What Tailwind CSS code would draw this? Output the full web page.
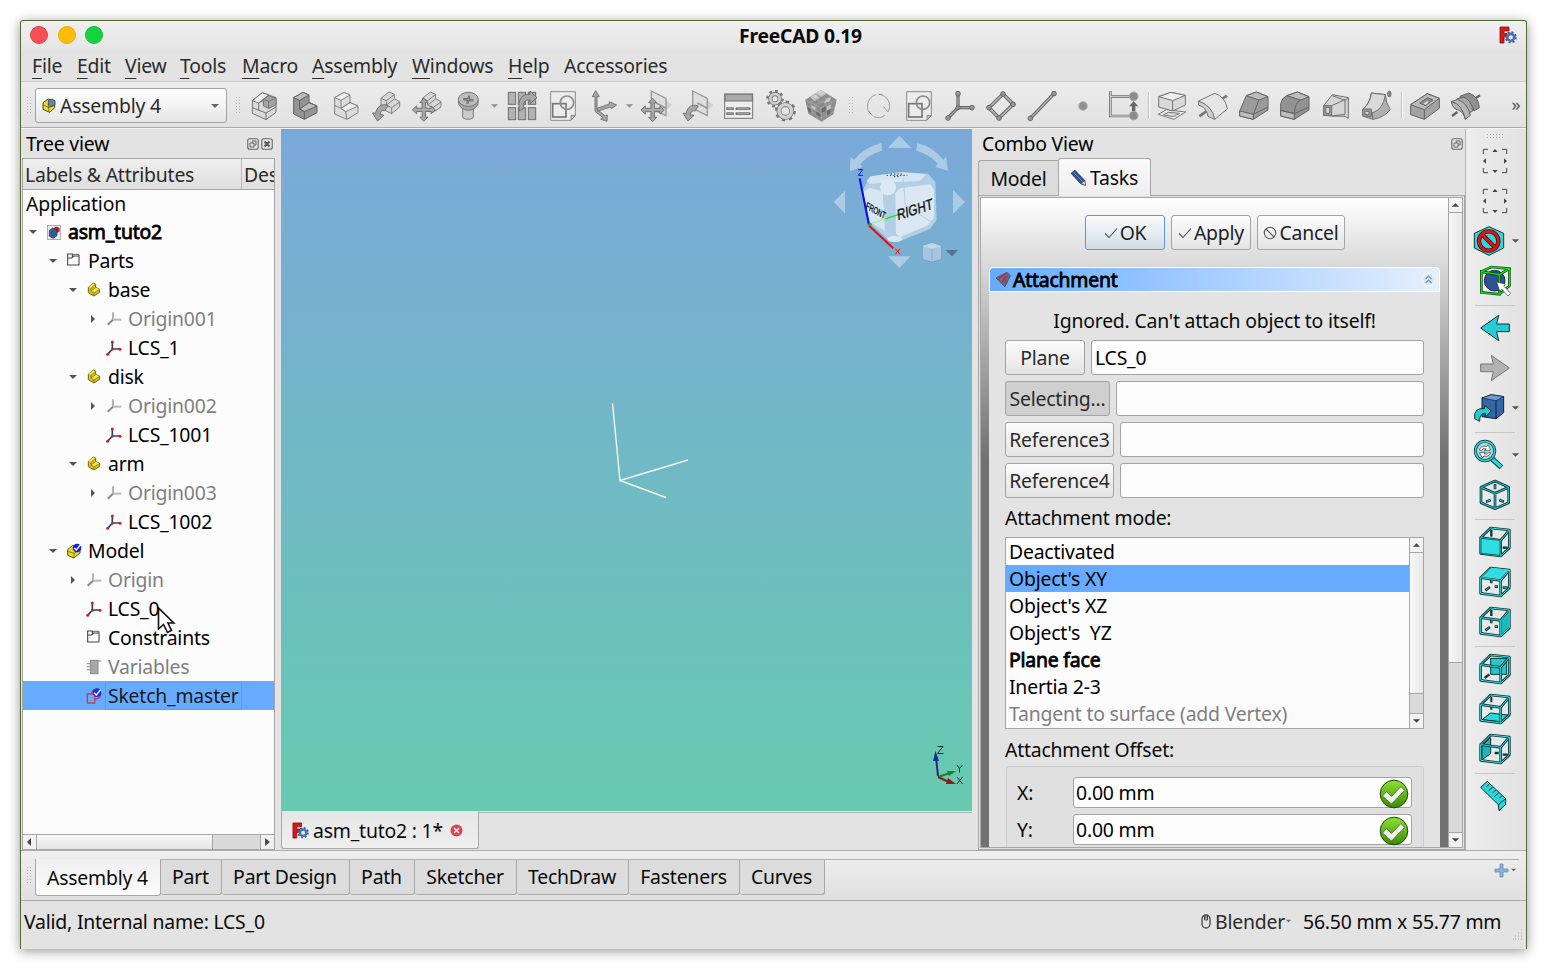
<!DOCTYPE html>
<html lang="en">
<head>
<meta charset="utf-8">
<title>FreeCAD 0.19</title>
<script src="https://cdn.jsdelivr.net/npm/@tailwindcss/browser@4"></script>
</head>
<body class="w-[1547px] h-[969px] overflow-hidden bg-white font-['Noto_Sans',sans-serif] text-[19.4px] tracking-[-0.2px] leading-[27px] text-[#0a0a0a] whitespace-nowrap">

<!-- shared symbols -->
<svg class="absolute w-0 h-0">
  <defs>
    <symbol id="down" viewBox="0 0 10 6"><path d="M1 1H9L5 5Z" fill="currentColor"/></symbol>
    <symbol id="right" viewBox="0 0 6 10"><path d="M1 1V9L5 5Z" fill="currentColor"/></symbol>
    <symbol id="float" viewBox="0 0 12 12"><rect x=".75" y=".75" width="10.5" height="10.5" rx="2" fill="none" stroke="#666" stroke-width="1.1"/><path d="M5.2 4.8V3H9V7H7.2M3 5H7V9H3Z" fill="none" stroke="#666"/></symbol>
    <symbol id="close" viewBox="0 0 12 12"><rect x=".75" y=".75" width="10.5" height="10.5" rx="2" fill="none" stroke="#666" stroke-width="1.1"/><path d="M3.5 3.5 8.5 8.5M8.5 3.5 3.5 8.5" stroke="#555" stroke-width="2"/></symbol>
    <symbol id="part" viewBox="198 290 48 48">
      <path d="M205 306 220 293 227 296V306L239 312V321L222 332 205 322Z" fill="#d8c01c" stroke="#5d5208" stroke-width="2.5"/>
      <path d="M206 305 220 294 226 297 213 309ZM213 318 227 307 238 312 222 322Z" fill="#f8e94e"/>
      <path d="M213 309V317L222 322V331M213 309 226 298M213 317 227 307M222 322 238 313" fill="none" stroke="#5d5208" stroke-width="1.6"/>
    </symbol>
    <symbol id="origin" viewBox="259 374 48 48"><path d="M280 378V400" stroke="#b5b5b5" stroke-width="6"/><path d="M281 400H305" stroke="#b9b9b9" stroke-width="6"/><path d="M280 400 264 415" stroke="#8a8a8a" stroke-width="6"/></symbol>
    <symbol id="lcs" viewBox="259 461 48 48"><path d="M278 468V488H301M278 488 264 504" fill="none" stroke="#27416e" stroke-width="5"/><g fill="#cf2222"><circle cx="278" cy="467" r="4.5"/><circle cx="301" cy="489" r="4.5"/><circle cx="278" cy="489" r="4"/><circle cx="264" cy="504" r="4.5"/></g></symbol>
    <symbol id="folder" viewBox="140 205 48 48"><path d="M145 208H159V214H179V241H145ZM145 220H157L163 214" fill="none" stroke="#444" stroke-width="3.200"/><path d="M160 209H179V214" fill="none" stroke="#444" stroke-width="2.500"/></symbol>
    <symbol id="fc" viewBox="0 0 18 18">
      <path d="M1 1H10V5H5V7.5H8V11H5V17H1Z" fill="#d21a1a" stroke="#8d0b0b" stroke-width=".8"/>
      <circle cx="11.8" cy="11.3" r="5" fill="none" stroke="#34578f" stroke-width="2" stroke-dasharray="2 1.93"/>
      <circle cx="11.8" cy="11.3" r="3.4" fill="#e6ebf4" stroke="#4872b2" stroke-width="2.6"/>
    </symbol>
    <symbol id="sketch" viewBox="141 27 96 96">
      <path d="M152 32H226V102L212 118H152Z" fill="#ececec" stroke="#8a8a8a" stroke-width="3"/>
      <path d="M213 118V103H226Z" fill="#b5b5b5" stroke="#777" stroke-width="2"/>
      <rect x="158" y="68" width="40" height="40" fill="none" stroke="#777" stroke-width="5"/>
      <circle cx="201" cy="65" r="20" fill="none" stroke="#8d8d8d" stroke-width="5"/>
    </symbol>
    <symbol id="cross" viewBox="0 0 74 74"><path d="M37 2 49 15H42V32H59V25L72 37 59 49V42H42V59H49L37 72 25 59H32V42H15V49L2 37 15 25V32H32V15H25Z" fill="#a9a9a9" stroke="#707070" stroke-width="3"/></symbol>
    <symbol id="curl" viewBox="0 0 56 66"><path d="M2 36 12 37C16 16 30 4 52 12L42 28C32 26 27 31 26 41L38 43 18 62Z" fill="#a5a5a5" stroke="#6c6c6c" stroke-width="3"/></symbol>
    <symbol id="fit" viewBox="45 45 96 96"><path d="M58 72V58H72M114 58H128V72M128 114V128H114M72 128H58V114" fill="none" stroke="#444" stroke-width="3"/><path d="M93 57 101 66H85ZM93 129 101 120H85ZM57 93 66 85V101ZM129 93 120 85V101Z" fill="#444"/></symbol>
    <path id="frame" d="M50 203 110 211V258L50 250ZM50 203 80 174 136 180 110 211M136 180V234L110 258" fill="none" stroke-linejoin="round"/>
    <symbol id="cube" viewBox="45 168 96 96"><use href="#frame" stroke="#0b3537" stroke-width="8"/><use href="#frame" stroke="#35dde0" stroke-width="3"/></symbol>
    <symbol id="ticks" viewBox="45 168 96 96"><path d="M82 206V220M64 241 78 231M92 230H102M116 233H131" stroke="#0b3537" stroke-width="8"/><path d="M82 208V218M67 239 76 232M94 230H100M118 233H129" stroke="#30b9bc" stroke-width="3"/></symbol>
    <linearGradient id="gg" x1="0" y1="0" x2="0" y2="1"><stop offset="0" stop-color="#8ce234"/><stop offset="1" stop-color="#3c8a05"/></linearGradient>
    <symbol id="ok" viewBox="0 0 30 30"><circle cx="15" cy="15" r="13.8" fill="url(#gg)" stroke="#1c4a06"/><path d="M3.5 17 7.5 12.5 12.5 17.5 22 7.5 25.5 11.5 12.5 25Z" fill="#f1f1ee" stroke="#3e6b2a" stroke-width=".8"/></symbol>
    <pattern id="dots" width="3" height="3" patternUnits="userSpaceOnUse"><rect width="1" height="1" fill="#b0b0b0"/></pattern>
  </defs>
</svg>

<div class="w-full h-full pt-5 pl-5">
<div class="w-[1507px] h-[929px] flex flex-col border border-b-0 border-[#566b33] rounded-t-[3px] bg-[#e3e3e3] shadow-[0_2px_12px_rgba(0,0,0,0.42)]">

  <!-- title bar -->
  <div class="h-[29px] shrink-0 flex items-center bg-linear-to-b from-[#f0f0f0] to-[#e5e5e5] rounded-t-[3px]">
    <div class="flex gap-[10px] pl-[9px] pb-[2px]">
      <span class="size-[18px] rounded-full bg-[#f45156] border border-[#e04048]"></span>
      <span class="size-[18px] rounded-full bg-[#fcbc0b] border border-[#eda80a]"></span>
      <span class="size-[18px] rounded-full bg-[#14d33c] border border-[#12bf35] -ml-px"></span>
    </div>
    <div class="w-[123px] ml-[636px] font-bold text-[19.3px] tracking-[-0.2px]">FreeCAD 0.19</div>
    <svg class="size-[18px] ml-[637px] mb-[2px]"><use href="#fc"/></svg>
  </div>

  <!-- menu bar -->
  <div class="h-[31px] shrink-0 flex items-center pb-px pl-[11px] text-[#2b2b2b] [&_u]:underline-offset-[5px] [&_u]:decoration-1">
    <span class="w-[45px]"><u>F</u>ile</span><span class="w-[48px]"><u>E</u>dit</span><span class="w-[55px]"><u>V</u>iew</span><span class="w-[62px]"><u>T</u>ools</span><span class="w-[70px]"><u>M</u>acro</span><span class="w-[100px]"><u>A</u>ssembly</span><span class="w-[96px]"><u>W</u>indows</span><span class="w-[56px]"><u>H</u>elp</span><span>Accessories</span>
  </div>

  <!-- toolbar -->
  <div class="h-[48px] shrink-0 flex items-center border-t border-[#cacaca] bg-linear-to-b from-[#ececec] to-[#e1e1e1] shadow-[inset_0_-1px_0_#f5f5f5,inset_0_-2px_0_#acacac] text-[#8e8e8e]">
    <svg class="w-[5px] h-[18px] ml-[6px]"><rect width="5" height="18" fill="url(#dots)"/></svg>
    <div class="ml-[3px] w-[192px] h-[35px] flex items-center rounded-[3px] border border-[#a3a3a3] bg-linear-to-b from-white to-[#e6e6e6] text-[#2b2b2b]">
      <svg class="size-[16px] ml-[5px] shrink-0" viewBox="124 291 48 48"><path d="M130 305 146 294 165 300V320L150 334 130 325Z" fill="#ecdc2e" stroke="#4d4608" stroke-width="3"/><path d="M146 298 157 294 166 299V312L152 318 146 312Z" fill="#5b84b4" stroke="#29384a" stroke-width="2"/><path d="M130 312 146 319 148 332M146 306V320L165 313" stroke="#6a5f08" stroke-width="2.4" fill="none"/></svg>
      <span class="ml-[3px] w-[150px] shrink-0">Assembly 4</span>
      <svg class="w-[10px] h-[6px] text-[#666] shrink-0"><use href="#down"/></svg>
    </div>
    <svg class="w-[5px] h-[18px] ml-[9px]"><rect width="5" height="18" fill="url(#dots)"/></svg>

    <div class="flex gap-[8.8px] ml-[7px] [&>svg]:size-8">
      <svg viewBox="744 267 96 96" stroke="#757575" stroke-width="3" stroke-linejoin="round"><path d="M757 299 787 275 828 290V334L798 356 757 337Z" fill="#dadada"/><path d="M757 299 787 275 806 282 776 306Z" fill="#f0f0f0"/><path d="M790 295 806 284 828 291V312L806 322 790 315Z" fill="#a4a4a4"/><path d="M790 295 806 301 828 291M806 301V322M757 320 798 336V356M798 336 828 318M776 306V328M776 306 790 298" fill="none"/></svg>
      <svg viewBox="866 267 96 96" stroke="#616161" stroke-width="3" stroke-linejoin="round"><path d="M880 290 908 274 926 282V304L950 315V335L912 355 880 339Z" fill="#959595"/><path d="M880 290 908 274 926 282 898 298ZM912 332 898 324 926 305 950 315Z" fill="#bdbdbd"/><path d="M898 298V324L912 332V355" fill="none"/></svg>
      <svg viewBox="989 267 96 96" stroke="#828282" stroke-width="3" stroke-linejoin="round"><path d="M1003 290 1031 274 1049 282V304L1073 315V335L1040 355 1003 339Z" fill="#dcdcdc"/><path d="M1003 290 1031 274 1049 282 1022 298ZM1036 332 1022 322 1049 305 1073 315Z" fill="#efefef"/><path d="M1022 298V322L1036 332 1040 355M1003 313 1022 322M1022 322 1049 304" fill="none"/></svg>
      <svg viewBox="1111 267 96 96" stroke="#808080" stroke-width="3" stroke-linejoin="round"><path d="M1144 292 1168 273 1184 280V293L1200 302V318L1176 338 1144 322Z" fill="#d8d8d8"/><path d="M1144 292 1160 299 1184 281M1160 299V312L1176 320 1200 303M1176 320V337M1160 312 1184 294" fill="none"/><use href="#curl" x="1115" y="302" width="56" height="62"/></svg>
      <svg viewBox="1234 267 96 96" stroke="#808080" stroke-width="3" stroke-linejoin="round"><path d="M1268 292 1292 273 1308 280V293L1324 302V318L1300 334 1268 322Z" fill="#d8d8d8"/><path d="M1268 292 1284 299 1308 281M1284 299V312L1300 320 1324 303M1300 320V334M1284 312 1308 294" fill="none"/><use href="#cross" x="1236" y="290" width="73" height="73"/></svg>
      <svg viewBox="1356 267 96 96" stroke="#787878" stroke-width="3"><path d="M1388 322H1420V350Q1404 360 1388 350Z" fill="#cbcbcb"/><ellipse cx="1405" cy="302" rx="30" ry="26" fill="#a5a5a5"/><ellipse cx="1405" cy="295" rx="30" ry="21" fill="#bcbcbc"/><path d="M1390 294 1420 298M1408 284 1402 308" stroke="#5e5e5e" stroke-width="7"/><path d="M1390 294 1420 298M1408 284 1402 308" stroke="#aaa" stroke-width="2"/></svg>
    </div>
    <svg class="w-[9px] h-[6px] ml-[6px] mr-[7px]"><use href="#down"/></svg>
    <div class="flex gap-[8.8px] [&>svg]:size-8">
      <svg viewBox="18 27 96 96" stroke="#6e6e6e" stroke-width="3"><g fill="#b1b1b1"><rect x="25" y="34" width="22" height="36"/><rect x="55" y="34" width="22" height="36"/><rect x="85" y="34" width="22" height="36"/><rect x="25" y="80" width="22" height="36"/><rect x="55" y="80" width="22" height="36"/><rect x="85" y="80" width="22" height="36"/></g><path d="M58 90C52 55 66 38 90 40V30L111 50 90 68V57C74 55 68 64 72 82Z" fill="#a8a8a8"/></svg>
      <svg><use href="#sketch"/></svg>
      <svg viewBox="264 27 96 96" stroke="#6a6a6a" stroke-width="2.5" fill="#a6a6a6"><path d="M287 29 298 47H291V85L316 105 322 102 321 121 302 115 309 110 285 91V47H277Z"/><path d="M291 82 328 69V62L350 72 334 83 331 78 293 91Z"/></svg>
    </div>
    <svg class="w-[9px] h-[6px] ml-[5px] mr-[7px]"><use href="#down"/></svg>
    <div class="flex gap-[9px] [&>svg]:size-8">
      <svg viewBox="425 27 96 96"><path d="M500 56 518 72 500 88Z" fill="#d0d0d0"/><path d="M456 30 500 52V104L456 82Z" fill="#dedede" stroke="#989898" stroke-width="4"/><path d="M470 66 500 82" stroke="#999" stroke-width="5"/><use href="#cross" x="423" y="50" width="74" height="74"/></svg>
      <svg viewBox="548 27 96 96"><path d="M624 56 642 72 624 88Z" fill="#d0d0d0"/><path d="M580 30 624 52V104L580 82Z" fill="#dedede" stroke="#989898" stroke-width="4"/><path d="M594 66 624 82" stroke="#999" stroke-width="5"/><use href="#curl" x="547" y="64" width="56" height="60"/></svg>
      <svg viewBox="669 27 96 96" stroke="#757575" stroke-width="3"><rect x="674" y="39" width="84" height="73" fill="#ededed"/><rect x="675" y="40" width="82" height="20" fill="#a9a9a9"/><path d="M682 83H698M682 98H698M710 83H748M710 98H748" stroke-width="8" stroke-linecap="round"/><path d="M683 83H697M683 98H697M711 83H747M711 98H747" stroke="#c4c4c4" stroke-width="2"/></svg>
      <svg viewBox="792 27 96 96" fill="none"><circle cx="825" cy="53" r="22" stroke="#777" stroke-width="9" stroke-dasharray="8 9.2"/><circle cx="825" cy="53" r="14" stroke="#7b7b7b" stroke-width="13"/><circle cx="825" cy="53" r="14" stroke="#cfcfcf" stroke-width="8"/><circle cx="856" cy="90" r="27" stroke="#777" stroke-width="9" stroke-dasharray="10 11.2"/><circle cx="856" cy="90" r="19" stroke="#7b7b7b" stroke-width="15"/><circle cx="856" cy="90" r="19" stroke="#cfcfcf" stroke-width="10"/></svg>
      <svg viewBox="915 27 96 96"><path d="M963 27 1010 56 1000 100 965 122 925 98 916 56Z" fill="#8b8b8b"/><path d="M963 27 980 38 963 48 946 38ZM930 48 946 40 960 50 944 60ZM980 52 994 48 988 62 972 66Z" fill="#d0d0d0"/><path d="M916 57 963 80 1010 56M918 72 964 98 1007 74M922 86 965 110 1003 90M932 61 938 104M947 70 951 114M978 70 979 112M994 62 991 104M963 80 965 122M931 46 980 70M947 37 995 62M995 46 947 72M980 37 932 62" stroke="#a9a9a9" stroke-width="2" fill="none"/><path d="M965 83 977 76V90L965 96ZM981 90 992 84V97L981 103ZM922 78 932 84 934 96 925 91ZM948 92 961 98V108L949 102Z" fill="#696969"/><path d="M981 76 992 70V82L981 88ZM934 72 946 78 947 88 936 82Z" fill="#c4c4c4"/></svg>
    </div>
    <svg class="w-[5px] h-[18px] ml-[12px] mr-[8px]"><rect width="5" height="18" fill="url(#dots)"/></svg>
    <div class="flex gap-[9px] [&>svg]:size-8">
      <svg viewBox="1086 27 96 96" fill="none" stroke="#8d8d8d" stroke-width="2.5"><path d="M1128 41A35 35 0 0 0 1117 103L1105 90M1121 107A35 35 0 0 0 1155 103M1136 40A35 35 0 0 1 1164 93M1164 93 1150 76M1147 40 1136 40"/></svg>
      <svg><use href="#sketch"/></svg>
      <svg viewBox="1332 27 96 96"><path d="M1374 38V80H1416M1374 80 1344 111" stroke="#666" stroke-width="10" fill="none"/><path d="M1374 38V80H1416M1374 80 1344 111" stroke="#a4a4a4" stroke-width="4" fill="none"/><g fill="#999" stroke="#666" stroke-width="3"><circle cx="1374" cy="38" r="7"/><circle cx="1416" cy="80" r="7"/><circle cx="1374" cy="80" r="6"/><circle cx="1344" cy="111" r="7"/></g></svg>
      <svg viewBox="1455 27 96 96"><path d="M1509 39 1540 70 1497 111 1467 80Z" stroke="#666" stroke-width="11" fill="none"/><path d="M1509 39 1540 70 1497 111 1467 80Z" stroke="#b4b4b4" stroke-width="5" fill="none"/><g fill="#999" stroke="#666" stroke-width="3"><circle cx="1509" cy="39" r="7"/><circle cx="1539" cy="70" r="7"/><circle cx="1497" cy="111" r="7"/><circle cx="1467" cy="80" r="7"/></g></svg>
      <svg viewBox="46 267 94 96"><path d="M58 352 129 278" stroke="#666" stroke-width="10"/><path d="M58 352 129 278" stroke="#b0b0b0" stroke-width="4"/><circle cx="58" cy="352" r="7" fill="#999" stroke="#666" stroke-width="3"/><circle cx="129" cy="278" r="7" fill="#999" stroke="#666" stroke-width="3"/></svg>
      <svg viewBox="166 267 94 96"><circle cx="213" cy="315" r="13" fill="#909090" stroke="#b3b3b3" stroke-width="3"/></svg>
      <svg viewBox="286 267 94 96"><path d="M292 271V345H362M292 287H362" fill="none" stroke="#6f6f6f" stroke-width="8"/><path d="M292 272V345H362M294 287H362" fill="none" stroke="#ddd" stroke-width="3"/><circle cx="362" cy="286" r="13" fill="#8c8c8c" stroke="#aaa" stroke-width="3"/><circle cx="362" cy="344" r="13" fill="#8c8c8c" stroke="#aaa" stroke-width="3"/><path d="M362 301 376 316H367V330H357V316H348Z" fill="#666"/></svg>
    </div>
    <span class="w-px h-[27px] ml-[8px] mr-[7px] bg-[#c2c2c2] shadow-[1px_0_0_#fff]"></span>
    <div class="flex gap-[9px] [&>svg]:size-8">
      <svg viewBox="426 267 94 96" stroke="#757575" stroke-width="3" stroke-linejoin="round"><path d="M432 340 456 326 514 333 478 355Z" fill="#eee"/><path d="M448 341 462 334 496 337 476 347Z" fill="#ddd"/><path d="M433 287 470 274 513 283V312L475 330 433 318Z" fill="#d9d9d9"/><path d="M433 287 470 274 513 283 475 299Z" fill="#eee"/><path d="M475 299V330" /></svg>
      <svg viewBox="546 267 94 96" stroke="#777" stroke-width="3" stroke-linejoin="round"><path d="M552 346 574 330M620 294 635 284" stroke-width="8"/><path d="M550 300 598 277Q630 286 636 324L598 355Q592 316 550 300Z" fill="#e6e6e6"/><path d="M550 300V312Q574 320 578 346L598 355Q592 316 550 300Z" fill="#cfcfcf"/></svg>
      <svg viewBox="666 267 94 96" stroke="#636363" stroke-width="3" stroke-linejoin="round"><path d="M670 330 690 284 720 273 755 287V327L711 355 670 345Z" fill="#9b9b9b"/><path d="M690 284 720 273 755 287 728 297ZM670 330 711 340V355L670 345Z" fill="#bdbdbd"/><path d="M728 297 711 340 755 318" fill="none"/></svg>
      <svg viewBox="786 267 94 96" stroke="#636363" stroke-width="3" stroke-linejoin="round"><path d="M790 328V308Q794 290 808 284L840 273 875 287V327L831 355 790 345Z" fill="#929292"/><path d="M808 284 840 273 875 287 850 297ZM790 328 831 338V355L790 345Z" fill="#bdbdbd"/><path d="M850 297Q833 302 831 338L875 318M790 328 831 338" fill="none"/></svg>
      <svg viewBox="906 267 94 96" stroke="#6f6f6f" stroke-width="3" stroke-linejoin="round"><path d="M916 314 942 281 990 290V352L980 346 940 345 916 343Z" fill="#d5d5d5"/><path d="M940 345 980 340V298L942 284M980 298 990 290M940 314 980 296" fill="none"/><rect x="916" y="314" width="24" height="29" fill="#a0a0a0"/><rect x="922" y="319" width="12" height="18" fill="#d5d5d5"/></svg>
      <svg viewBox="1026 267 94 96" stroke="#6f6f6f" stroke-width="3" stroke-linejoin="round"><path d="M1032 324Q1052 304 1056 276L1098 281Q1100 308 1113 326 1094 350 1060 355L1032 346Z" fill="#b0b0b0"/><path d="M1056 276 1098 281Q1092 326 1058 336L1032 324Q1054 304 1056 276Z" fill="#dadada"/><path d="M1060 355V336" fill="none"/><rect x="1030" y="324" width="26" height="22" fill="#999"/><rect x="1037" y="331" width="12" height="9" fill="#ddd"/><ellipse cx="1110" cy="279" rx="5" ry="9" fill="#8c8c8c"/></svg>
    </div>
    <span class="w-px h-[27px] ml-[8px] mr-[7px] bg-[#c2c2c2] shadow-[1px_0_0_#fff]"></span>
    <div class="flex gap-[9px] [&>svg]:size-8">
      <svg viewBox="1165 267 94 96" stroke="#636363" stroke-width="3" stroke-linejoin="round"><path d="M1169 311 1219 278 1255 292V322L1210 355 1169 341Z" fill="#a3a3a3"/><path d="M1169 311 1219 278 1255 292 1210 326Z" fill="#bcbcbc"/><path d="M1210 326V355" /><path d="M1196 306 1219 290 1236 297 1213 314Z" fill="#8a8a8a"/><path d="M1206 309 1219 300 1224 303 1213 311Z" fill="#ddd" stroke="none"/></svg>
      <svg viewBox="1285 267 94 96" stroke="#636363" stroke-width="3" stroke-linejoin="round"><path d="M1290 345 1306 333M1356 295 1374 283" stroke-width="7"/><path d="M1314 286 1340 276Q1370 286 1372 320L1356 330Q1352 302 1314 292Z" fill="#8f8f8f"/><path d="M1304 294 1326 288Q1350 300 1352 330L1338 338Q1332 308 1304 298Z" fill="#a8a8a8"/><path d="M1288 302 1306 295Q1338 306 1345 343L1330 355Q1326 330 1300 324 1288 314 1288 302Z" fill="#b5b5b5"/><path d="M1288 302Q1320 308 1330 355" fill="none"/></svg>
    </div>
    <span class="ml-[30px] text-[18px] text-[#555] leading-none -mt-[3px]">»</span>
  </div>

  <!-- main area -->
  <div class="h-[721px] shrink-0 flex">

    <!-- tree dock -->
    <div class="w-[254px] pl-px flex flex-col">
      <div class="h-[29px] shrink-0 flex items-center pl-1 text-black"><span class="w-[221px]">Tree view</span><svg class="size-[12px]"><use href="#float"/></svg><svg class="size-[12px] ml-[2px]"><use href="#close"/></svg></div>
      <div class="h-[692px] shrink-0 border border-[#a6a6a6] bg-[#fcfcfc] flex flex-col relative">
        <div class="h-[31px] shrink-0 flex items-center border-b border-[#a6a6a6] bg-linear-to-b from-[#f0f0f0] to-[#dedede] text-[#2b2b2b] overflow-hidden">
          <span class="w-[219px] shrink-0 h-full pl-[2px] pt-[2px] border-r border-[#bcbcbc]">Labels &amp; Attributes</span><span class="pl-[2px]">Des</span>
        </div>
        <div class="h-[27px] shrink-0 pl-[3px]">Application</div>
        <div class="flex flex-col text-black [&>div]:h-[29px] [&>div]:flex [&>div]:items-center [&_svg]:shrink-0 [&_b]:font-normal">
          <div class="pl-[5px]"><svg class="w-[10px] h-[6px] text-[#555]"><use href="#down"/></svg>
            <svg class="size-[16px] ml-[8px] mr-[6px]" viewBox="78 113 48 48"><rect x="82" y="117" width="40" height="43" fill="#eee" stroke="#8c8c8c" stroke-width="2"/><circle cx="110" cy="130" r="9" fill="#dd1414"/><path d="M88 133 98 125 111 130V148L100 156 88 150Z" fill="#345d96" stroke="#183058" stroke-width="2"/></svg><b class="[-webkit-text-stroke:0.8px_#000]">asm_tuto2</b></div>
          <div class="pl-[25px]"><svg class="w-[10px] h-[6px] text-[#555]"><use href="#down"/></svg><svg class="size-[16px] ml-[8px] mr-[6px]"><use href="#folder"/></svg>Parts</div>
          <div class="pl-[45px]"><svg class="w-[10px] h-[6px] text-[#555]"><use href="#down"/></svg><svg class="size-[16px] ml-[8px] mr-[6px]"><use href="#part"/></svg>base</div>
          <div class="pl-[67px] text-[#808080]"><svg class="w-[6px] h-[10px] text-[#555]"><use href="#right"/></svg><svg class="size-[16px] ml-[10px] mr-[6px]"><use href="#origin"/></svg>Origin001</div>
          <div class="pl-[83px]"><svg class="size-[16px] mr-[6px]"><use href="#lcs"/></svg>LCS_1</div>
          <div class="pl-[45px]"><svg class="w-[10px] h-[6px] text-[#555]"><use href="#down"/></svg><svg class="size-[16px] ml-[8px] mr-[6px]"><use href="#part"/></svg>disk</div>
          <div class="pl-[67px] text-[#808080]"><svg class="w-[6px] h-[10px] text-[#555]"><use href="#right"/></svg><svg class="size-[16px] ml-[10px] mr-[6px]"><use href="#origin"/></svg>Origin002</div>
          <div class="pl-[83px]"><svg class="size-[16px] mr-[6px]"><use href="#lcs"/></svg>LCS_1001</div>
          <div class="pl-[45px]"><svg class="w-[10px] h-[6px] text-[#555]"><use href="#down"/></svg><svg class="size-[16px] ml-[8px] mr-[6px]"><use href="#part"/></svg>arm</div>
          <div class="pl-[67px] text-[#808080]"><svg class="w-[6px] h-[10px] text-[#555]"><use href="#right"/></svg><svg class="size-[16px] ml-[10px] mr-[6px]"><use href="#origin"/></svg>Origin003</div>
          <div class="pl-[83px]"><svg class="size-[16px] mr-[6px]"><use href="#lcs"/></svg>LCS_1002</div>
          <div class="pl-[25px]"><svg class="w-[10px] h-[6px] text-[#555]"><use href="#down"/></svg>
            <svg class="size-[16px] ml-[8px] mr-[6px]" viewBox="140 215 48 48"><path d="M145 235 160 222 182 228V245L164 260 145 252Z" fill="#ecd82e" stroke="#5d5208" stroke-width="3"/><path d="M145 240 164 246V260M164 246 182 236" stroke="#5d5208" stroke-width="2" fill="none"/><circle cx="173" cy="230" r="13" fill="#1620ee"/><path d="M165 230 171 236 184 220" fill="none" stroke="#fff" stroke-width="4"/></svg>Model</div>
          <div class="pl-[47px] text-[#808080]"><svg class="w-[6px] h-[10px] text-[#555]"><use href="#right"/></svg><svg class="size-[16px] ml-[10px] mr-[6px]"><use href="#origin"/></svg>Origin</div>
          <div class="pl-[63px]"><svg class="size-[16px] mr-[6px]"><use href="#lcs"/></svg>LCS_0</div>
          <div class="pl-[63px]"><svg class="size-[16px] mr-[6px]"><use href="#folder"/></svg>Constraints</div>
          <div class="pl-[63px] text-[#808080]"><svg class="size-[16px] mr-[6px]" viewBox="198 564 48 48"><path d="M210 570H244M200 578H212M200 587H212M200 596H212" stroke="#8a8a8a" stroke-width="3"/><rect x="212" y="568" width="22" height="40" fill="#a8a8a8" stroke="#8a8a8a" stroke-width="3"/></svg>Variables</div>
          <div class="pl-[63px] bg-[#66abff] text-[#1b1b1b]"><svg class="size-[16px]" viewBox="198 651 48 48"><path d="M202 669H224V696H202ZM214 669A14 14 0 1 1 226 684" fill="none" stroke="#b8405c" stroke-width="4"/><circle cx="231" cy="665" r="13" fill="#1c2fe6"/><path d="M222 665 229 672 242 656" fill="none" stroke="#fff" stroke-width="4"/></svg><span class="ml-[3px] pl-[2px] w-[137px] h-[28px] leading-[25px] border border-[#5b9df0]">Sketch_master</span></div>
        </div>
        <div class="mt-auto h-[15px] flex items-center border-t border-[#a6a6a6] text-[#444] bg-[#dadada]">
          <svg class="w-[13px] h-full bg-[#f2f2f2]" viewBox="0 0 13 13"><path d="M8 2.500V10.500L4 6.500Z" fill="currentColor"/></svg>
          <span class="w-[177px] h-full border-x border-[#a6a6a6] bg-linear-to-b from-[#f6f6f6] to-[#e6e6e6]"></span>
          <span class="w-[47px]"></span>
          <span class="h-full w-[14px] border-l border-[#a6a6a6] bg-[#f0f0f0] flex items-center justify-center"><svg class="w-[5px] h-[8px]" viewBox="0 0 6 10"><path d="M0 0V10L6 5Z" fill="currentColor"/></svg></span>
        </div>
        <!-- pointer -->
        <svg class="absolute left-[133px] top-[447px] w-[20px] h-[30px]" viewBox="0 0 20 30"><path d="M2.5 2V23L7.5 18.5 11.5 26.5 15.5 24.5 12 17H17.8Z" fill="#fff" stroke="#111" stroke-width="1.6"/></svg>
      </div>
    </div>

    <!-- 3D view -->
    <div class="w-[697px] pl-[6px] flex flex-col">
      <svg class="w-[691px] h-[682px] shrink-0" viewBox="0 0 691 682">
        <defs><linearGradient id="sky" x1="0" y1="0" x2="0" y2="1"><stop offset="0" stop-color="#7aa9d9"/><stop offset="1" stop-color="#67cab0"/></linearGradient></defs>
        <rect width="691" height="682" fill="url(#sky)"/>
        <path d="M331.500 274.500 339 351.500 407 331M339 351.500 385 368.500" fill="none" stroke="#f4f8f8" stroke-width="1.4"/>
        <g transform="translate(539 -4) scale(.3333)">
          <g fill="#aecbe6">
            <path d="M238 32 274 69H203ZM238 429 272 394H204ZM41 231 75 197V265ZM435 231 399 195V267Z"/>
            <path d="M184 54 186 77Q145 88 120 118L128 126 90 138 91 95 102 104Q135 66 184 54ZM292 54 289 77Q328 88 354 116L346 126 384 137 378 95 370 104Q340 66 292 54Z"/>
          </g>
          <path d="M150 155 248 141 325 146 346 172 350 285 330 312 235 350 205 345 150 295 128 195Z" fill="#b3cfe6"/>
          <path d="M152 154 240 142 318 148 300 168 222 172 150 176 140 168Z" fill="#d5e4f1"/>
          <path d="M130 200 150 188 188 200 195 318 150 290Z" fill="#d8e6f2"/>
          <path d="M226 205 240 190 330 178 342 195 342 278 325 300 240 337 228 325Z" fill="#dbe8f3"/>
          <circle cx="204" cy="187" r="24" fill="#dce9f4"/><ellipse cx="224" cy="342" rx="22" ry="9" fill="#d8e8f2"/>
          <path d="M250 160 256 240 335 292" stroke="#b4cfe4" stroke-width="3" fill="none"/>
          <path d="M200 151H262M212 147H250M222 155H240" stroke="#111" stroke-width="2.500" stroke-dasharray="4 6"/>
          <path d="M150 298 200 280" stroke="#a5f0a5" stroke-width="5"/><path d="M196 282 250 264" stroke="#12e012" stroke-width="4"/>
          <text transform="translate(233 286) rotate(-18) skewX(-12)" font-family="Liberation Sans" font-size="44" letter-spacing="0" textLength="112" lengthAdjust="spacingAndGlyphs" fill="#111" stroke="#111">RIGHT</text>
          <text transform="translate(136 250) rotate(30) skewX(14)" font-family="Liberation Sans" font-size="28" letter-spacing="0" textLength="66" lengthAdjust="spacingAndGlyphs" fill="#111" stroke="#111">FRONT</text>
          <path d="M119 160 147 300" stroke="#0808ee" stroke-width="6"/><path d="M147 302 220 370" stroke="#f00a0a" stroke-width="6"/><circle cx="150" cy="298" r="5" fill="#15b515"/>
          <path d="M114 134H128L115 151H129" fill="none" stroke="#1010f0" stroke-width="3"/><path d="M226 371 240 388M240 371 226 388" stroke="#f01010" stroke-width="3"/>
          <path d="M307 362 336 354 365 363V403L336 412 307 403Z" fill="#a6c5df" stroke="#6f93b0" stroke-width="2"/><path d="M307 362 336 372 365 363 336 354Z" fill="#bfd7ea"/><path d="M336 372V412" stroke="#7fa0bc" stroke-width="2"/>
          <path d="M377 375H414L396 394Z" fill="#55738f"/>
        </g>
        <path d="M657 647 655 628" stroke="#222a88" stroke-width="2"/><path d="M654.500 622 658 632H652Z" fill="#222a88"/>
        <path d="M657 648 672 643" stroke="#1c8030" stroke-width="2"/><path d="M675 642 666 642 668 647Z" fill="#1c8030"/>
        <path d="M657 648 670 654" stroke="#8c1d1d" stroke-width="2"/><path d="M675 655 667 649 665 655Z" fill="#8c1d1d"/>
        <path d="M656.500 617.500H662L656.500 624.500H662.500M676 636 678.500 639.500 681.500 636M678.500 639.500V643.500M676 648 681.500 655M681.500 648 676 655" fill="none" stroke="#143028"/>
      </svg>
      <div class="h-[39px] flex">
        <div class="w-[198px] h-[38px] flex items-center pt-px rounded-b-[3px] border border-t-0 border-[#a8a8a8] bg-linear-to-b from-[#e6e6e6] to-[#efefef]">
          <svg class="size-[17px] ml-[10px]"><use href="#fc"/></svg><span class="ml-[4px] w-[137px] pt-px">asm_tuto2 : 1*</span>
          <svg class="size-[13px]" viewBox="0 0 13 13"><circle cx="6.500" cy="6.500" r="6" fill="#dc4550"/><path d="M4 4 9 9M9 4 4 9" stroke="#fff" stroke-width="1.200"/></svg>
        </div>
        <div class="flex-1 mt-px border-t border-[#b0b0b0]"></div>
      </div>
    </div>

    <!-- combo dock -->
    <div class="w-[493px] pl-[6px] flex flex-col">
      <div class="h-[29px] shrink-0 flex items-center pl-1 text-black"><span class="w-[469px]">Combo View</span><svg class="size-[12px] shrink-0"><use href="#float"/></svg></div>
      <div class="h-[38px] flex items-end shrink-0">
        <div class="w-[80px] h-[36px] flex items-center justify-center rounded-tl-[3px] border border-r-0 border-[#a6a6a6] bg-[#dcdcdc]">Model</div>
        <div class="w-[93px] h-[38px] flex items-center rounded-t-[3px] border border-b-0 border-[#a6a6a6] bg-linear-to-b from-[#fafafa] to-[#eee] pl-[11px]">
          <svg class="size-[16px]" viewBox="300 118 48 48"><path d="M303 128 315 119 344 149 346 164 332 159Z" fill="#2c5288" stroke="#162c50" stroke-width="2"/><path d="M309 123 338 153" stroke="#6f97cd" stroke-width="3"/><path d="M333 158 344 150 346 164Z" fill="#ececec" stroke="#333" stroke-width="1.500"/></svg><span class="ml-[4px]">Tasks</span>
        </div>
        <div class="flex-1 h-px bg-[#a6a6a6]"></div>
      </div>
      <div class="h-[654px] w-[487px] border-x border-b border-[#a6a6a6] p-px flex">
        <div class="h-[651px] w-[483px] flex border border-[#a6a6a6] overflow-hidden">
          <div class="w-[467px] shrink-0 h-full overflow-hidden bg-linear-to-b from-white to-[#717171] to-[262px] px-[8px] pt-[17px] flex flex-col">
            <div class="flex gap-[6px] justify-center pl-px text-[#222] shrink-0 [&>div]:flex [&>div]:items-center [&>div]:justify-center [&>div]:h-[35px] [&>div]:rounded-[3px] [&>div]:border">
              <div class="w-[80px] border-[#5a97dc] bg-linear-to-b from-[#fafcfe] to-[#d3dce4]"><svg class="size-[14px] mr-[2px]" viewBox="0 0 14 14"><path d="M1 7.500 5 11.500 13 2.500" fill="none" stroke="#555" stroke-width="1.100"/></svg>OK</div>
              <div class="w-[80px] border-[#a6a6a6] bg-linear-to-b from-[#fcfcfc] to-[#e4e4e4]"><svg class="size-[14px] mr-[2px]" viewBox="0 0 14 14"><path d="M1 7.500 5 11.500 13 2.500" fill="none" stroke="#555" stroke-width="1.100"/></svg>Apply</div>
              <div class="w-[88px] border-[#a6a6a6] bg-linear-to-b from-[#fcfcfc] to-[#e4e4e4]"><svg class="size-[14px] mr-[2px]" viewBox="0 0 14 14"><circle cx="7" cy="7" r="5.700" fill="none" stroke="#555" stroke-width="1.100"/><path d="M3 3 11 11" stroke="#555" stroke-width="1.100"/></svg>Cancel</div>
            </div>
            <div class="mt-[17px] h-[25px] shrink-0 flex items-center rounded-t-[4px] border border-white bg-linear-to-r from-[#66abff] to-[#e6f0fd] pl-[5px] text-black">
              <svg class="size-[16px]" viewBox="76 423 48 48"><path d="M79 441 112 424 122 434 106 467Z" fill="#5a7292" stroke="#2b3c54" stroke-width="2"/><path d="M86 448Q92 432 108 430M98 458Q100 440 114 436M104 436 108 458" fill="none" stroke="#cf2430" stroke-width="4"/></svg>
              <span class="ml-[2px] w-[409px] [-webkit-text-stroke:0.8px_#000]">Attachment</span>
              <svg class="size-[13px]" viewBox="0 0 13 13"><circle cx="6.500" cy="6.500" r="6" fill="#e4e4e4" stroke="#f6f6f6"/><path d="M3.500 6 6.500 3 9.500 6M3.500 10 6.500 7 9.500 10" fill="none" stroke="#4f9bf5" stroke-width="1.200"/></svg>
            </div>
            <div class="h-[556px] shrink-0 bg-[#e3e3e3] px-[16px] pt-[15px] flex flex-col">
              <div class="text-center h-[27px] shrink-0">Ignored. Can't attach object to itself!</div>
              <div class="mt-[6px] flex flex-col gap-[6px] shrink-0 text-[#2b2b2b] [&>div]:flex [&>div]:gap-[6px] [&>div]:h-[35px] [&_b]:font-normal [&_b]:flex [&_b]:items-center [&_b]:justify-center [&_b]:rounded-[3px] [&_b]:border [&_b]:border-[#a3a3a3] [&_i]:not-italic [&_i]:flex-1 [&_i]:bg-[#fdfdfd] [&_i]:border [&_i]:border-[#a3a3a3] [&_i]:rounded-[3px] [&_i]:flex [&_i]:items-center [&_i]:pl-[3px] [&_i]:text-black">
                <div><b class="w-[80px] bg-linear-to-b from-[#fcfcfc] to-[#e4e4e4]">Plane</b><i>LCS_0</i></div>
                <div><b class="w-[105px] bg-[#cfcfcf]">Selecting...</b><i></i></div>
                <div><b class="w-[109px] bg-linear-to-b from-[#fcfcfc] to-[#e4e4e4]">Reference3</b><i></i></div>
                <div><b class="w-[109px] bg-linear-to-b from-[#fcfcfc] to-[#e4e4e4]">Reference4</b><i></i></div>
              </div>
              <div class="mt-[6px] h-[27px] shrink-0">Attachment mode:</div>
              <div class="mt-[6px] h-[192px] shrink-0 flex border border-[#a6a6a6] bg-[#fcfcfc] text-black">
                <div class="w-[403px] shrink-0 overflow-hidden [&>div]:h-[27px] [&>div]:pl-[3px]">
                  <div>Deactivated</div><div class="bg-[#66abff]">Object's XY</div><div>Object's XZ</div><div class="whitespace-pre">Object's  YZ</div><div class="[-webkit-text-stroke:0.8px_#000]">Plane face</div><div>Inertia 2-3</div><div class="text-[#808080]">Tangent to surface (add Vertex)</div>
                </div>
                <div class="w-[14px] border-l border-[#a6a6a6] bg-[#dadada] flex flex-col text-[#444]">
                  <span class="h-[14px] flex items-center justify-center bg-[#f3f3f3]"><svg class="w-[9px] h-[6px] rotate-180"><use href="#down"/></svg></span>
                  <span class="h-[142px] border-y border-[#a6a6a6] bg-linear-to-r from-[#f8f8f8] to-[#e8e8e8]"></span>
                  <span class="mt-auto h-[15px] border-t border-[#a6a6a6] flex items-center justify-center bg-[#f3f3f3]"><svg class="w-[9px] h-[6px]"><use href="#down"/></svg></span>
                </div>
              </div>
              <div class="mt-[7px] h-[27px] shrink-0">Attachment Offset:</div>
              <div class="ml-px mt-[3px] h-[90px] shrink-0 rounded-t-[3px] border border-[#cdcdcd] bg-[#e0e0e0] pt-[10px] pl-[10px] pr-[11px] flex flex-col gap-[6px] [&>div]:flex [&>div]:items-center [&>div]:h-[31px]">
                <div><span class="w-[56px]">X:</span><span class="flex-1 h-full rounded-[3px] border border-[#a3a3a3] bg-[#fdfdfd] flex items-center justify-between pl-[2px] pr-[2px] text-black">0.00 mm<svg class="size-[30px] mt-[3px]"><use href="#ok"/></svg></span></div>
                <div><span class="w-[56px]">Y:</span><span class="flex-1 h-full rounded-[3px] border border-[#a3a3a3] bg-[#fdfdfd] flex items-center justify-between pl-[2px] pr-[2px] text-black">0.00 mm<svg class="size-[30px] mt-[3px]"><use href="#ok"/></svg></span></div>
              </div>
            </div>
          </div>
          <div class="w-[14px] shrink-0 border-l border-[#a6a6a6] bg-[#dadada] flex flex-col text-[#444]">
            <span class="h-[14px] flex items-center justify-center bg-[#f3f3f3]"><svg class="w-[9px] h-[6px] rotate-180"><use href="#down"/></svg></span>
            <span class="h-[451px] border-y border-[#a6a6a6] bg-linear-to-r from-[#f8f8f8] to-[#e8e8e8]"></span>
            <span class="mt-auto h-[15px] border-t border-[#a6a6a6] flex items-center justify-center bg-[#f3f3f3]"><svg class="w-[9px] h-[6px]"><use href="#down"/></svg></span>
          </div>
        </div>
      </div>
    </div>

    <!-- view toolbar -->
    <div class="w-[61px] border-l border-[#b0b0b0] bg-linear-to-r from-[#ededed] to-[#e2e2e2] flex flex-col text-[#555] pl-[9px] [&>svg]:shrink-0 [&>svg.i]:size-8 [&>svg.i]:ml-[4px] [&>svg.i]:mb-2 [&>hr]:w-[40px] [&>hr]:border-[#c6c6c6] [&>hr]:mb-[6px] [&>div]:flex [&>div]:shrink-0 [&>div]:items-center [&>div]:h-8 [&>div]:mb-2 [&>div>svg.i]:size-8 [&>div>svg.i]:ml-[-2px]">
      <svg class="w-[18px] h-[6px] mt-[5px] mb-[5px] ml-[12px]"><rect width="18" height="5" fill="url(#dots)"/></svg>
      <svg class="i"><use href="#fit"/></svg>
      <svg class="i"><use href="#fit"/></svg>
      <div><svg class="i" viewBox="27 285 96 96"><path d="M75 290 119 310V354L75 376 31 354V310Z" fill="#2cd9dc" stroke="#0b3537" stroke-width="3"/><circle cx="74" cy="333" r="29" fill="none" stroke="#5e0808" stroke-width="13"/><path d="M54 313 94 353" stroke="#5e0808" stroke-width="13"/><circle cx="74" cy="333" r="29" fill="none" stroke="#d81818" stroke-width="8"/><path d="M54 313 94 353" stroke="#d81818" stroke-width="8"/></svg><svg class="w-[9px] h-[6px] ml-[6px]"><use href="#down"/></svg></div>
      <svg class="i" viewBox="45 405 96 96"><path d="M50 424 82 410 137 415V468L106 495 50 488Z" fill="#f4f4f4"/><circle cx="92" cy="452" r="31" fill="#2c5494" stroke="#14284c" stroke-width="3"/><path d="M52 425 106 434V493L52 487ZM52 425 82 411 136 416 106 434M136 416V468L106 493" fill="none" stroke="#083d08" stroke-width="8"/><path d="M52 425 106 434V493L52 487ZM52 425 82 411 136 416 106 434M136 416V468L106 493" fill="none" stroke="#10e020" stroke-width="4"/><path d="M98 456 124 462 120 469 140 490 132 498 113 477 107 484Z" fill="#fff" stroke="#333" stroke-width="2"/></svg>
      <hr>
      <svg class="i" viewBox="45 546 96 96"><path d="M50 594 104 556 98 582H136V605H98L104 632Z" fill="#27cdd0" stroke="#0b3537" stroke-width="3"/></svg>
      <svg class="i" viewBox="45 666 96 96"><path d="M136 714 82 676 88 702H50V725H88L82 752Z" fill="#b2b2b2" stroke="#777" stroke-width="3"/></svg>
      <div><svg class="i" viewBox="27 786 96 96"><path d="M54 804 82 794 119 800V848L96 866 54 860Z" fill="#3465a4" stroke="#10213c" stroke-width="3"/><path d="M54 804 82 794 119 800 96 812Z" fill="#6f9ad2" stroke="#10213c" stroke-width="2"/><path d="M96 812V866" stroke="#10213c" stroke-width="3"/><path d="M32 866Q28 832 62 836V826L82 843 64 860V850Q46 850 47 874Z" fill="#27cdd0" stroke="#0b3537" stroke-width="3"/></svg><svg class="w-[9px] h-[6px] ml-[6px]"><use href="#down"/></svg></div>
      <hr>
      <div><svg class="i" viewBox="27 927 96 96"><path d="M82 984 112 1012" stroke="#0b3537" stroke-width="16"/><path d="M84 986 111 1010" stroke="#2cd9dc" stroke-width="10"/><circle cx="63" cy="963" r="29" fill="#a9d7da" stroke="#0b3537" stroke-width="9"/><circle cx="63" cy="963" r="29" fill="none" stroke="#2ccfd2" stroke-width="5"/><path d="M46 960Q50 946 68 950L72 944 80 960 62 962 66 956Q56 954 52 962ZM80 968Q74 982 60 978L56 984 46 968 64 967 60 972Q70 974 74 968Z" fill="#fff" stroke="#333" stroke-width="2"/></svg><svg class="w-[9px] h-[6px] ml-[6px]"><use href="#down"/></svg></div>
      <svg class="i" viewBox="45 27 96 96"><g fill="none" stroke-linejoin="round"><path d="M93 33 134 52V98L93 116 51 98V52ZM51 52 93 70 134 52M93 70V116M93 42V58M66 95 80 90M106 90 120 95" stroke="#0b3537" stroke-width="8"/><path d="M93 33 134 52V98L93 116 51 98V52ZM51 52 93 70 134 52M93 70V116M93 44V56M68 94 78 91M108 91 118 94" stroke="#35c9cc" stroke-width="3"/></g></svg>
      <hr>
      <svg class="i" viewBox="45 168 96 96"><path d="M82 180V200" stroke="#0b3537" stroke-width="7"/><path d="M116 233H131" stroke="#0b3537" stroke-width="7"/><use href="#cube" x="45" y="168" width="96" height="96"/><path d="M51 205 108 211V256L51 250Z" fill="#30dde0" stroke="#0b3537" stroke-width="2"/></svg>
      <svg class="i" viewBox="45 168 96 96"><use href="#ticks" x="45" y="168" width="96" height="96"/><use href="#cube" x="45" y="168" width="96" height="96"/><path d="M54 201 82 174 134 180 109 207Z" fill="#30dde0"/></svg>
      <svg class="i" viewBox="45 168 96 96"><path d="M82 180V198" stroke="#0b3537" stroke-width="7"/><use href="#ticks" x="45" y="168" width="96" height="96"/><use href="#cube" x="45" y="168" width="96" height="96"/><path d="M112 211 135 186V232L112 254Z" fill="#1cbabd"/></svg>
      <hr>
      <svg class="i" viewBox="45 168 96 96"><path d="M80 184H128V232H80Z" fill="#27c6c9" stroke="#0b3537" stroke-width="3"/><path d="M62 243 76 232" stroke="#0b3537" stroke-width="7"/><use href="#cube" x="45" y="168" width="96" height="96"/></svg>
      <svg class="i" viewBox="45 168 96 96"><path d="M54 248 80 228 132 234 110 254Z" fill="#27d6d9" stroke="#0b3537" stroke-width="3"/><path d="M82 180V218" stroke="#0b3537" stroke-width="6" stroke-dasharray="16 8"/><use href="#cube" x="45" y="168" width="96" height="96"/></svg>
      <svg class="i" viewBox="45 168 96 96"><path d="M54 206 80 182V230L54 248Z" fill="#1cb6b9" stroke="#0b3537" stroke-width="3"/><path d="M92 228H104M116 233H131" stroke="#0b3537" stroke-width="7"/><use href="#cube" x="45" y="168" width="96" height="96"/></svg>
      <hr>
      <svg class="i" viewBox="45 930 96 96"><path d="M50 952 70 934 125 986V1004L105 1022 103 1004Z" fill="#2cd6d9" stroke="#0b3537" stroke-width="3" stroke-linejoin="round"/><path d="M103 1004 125 986M76 942 68 950M86 951 74 962M95 960 87 968M104 968 92 980M114 977 106 985" stroke="#0b3537" stroke-width="3"/></svg>
    </div>
  </div>

  <!-- workbench tabs -->
  <div class="h-[51px] shrink-0 flex border-y border-[#acacac] bg-linear-to-b from-[#efefef] to-[#e0e0e0] pt-[8px]">
    <svg class="w-[5px] h-[18px] ml-[6px] mr-[3px] mt-[8px]"><rect width="5" height="18" fill="url(#dots)"/></svg>
    <div class="w-[1484px] flex border-t border-[#b0b0b0] [&>span]:shrink-0 [&>span]:h-[35px] [&>span]:pb-px [&>span]:pr-px [&>span]:flex [&>span]:items-center [&>span]:justify-center [&>span]:rounded-b-[3px] [&>span]:border-r [&>span]:border-b [&>span]:border-[#a8a8a8] [&>span]:bg-[#dcdcdc]">
      <div class="w-[126px] shrink-0 h-[37px] -mt-px flex items-center justify-center pr-px rounded-b-[3px] border border-t-0 border-[#a8a8a8] bg-linear-to-b from-[#f0f0f0] to-[#fcfcfc]">Assembly 4</div>
      <span class="w-[61px]">Part</span><span class="w-[128px]">Part Design</span><span class="w-[65px]">Path</span><span class="w-[102px]">Sketcher</span><span class="w-[112px]">TechDraw</span><span class="w-[111px]">Fasteners</span><span class="w-[85px]">Curves</span>
      <div class="flex-1 flex justify-end pr-[2px] pt-[3px] gap-px text-[#666]"><svg class="size-[15px]" viewBox="0 0 15 15"><path d="M6 1H9V6H14V9H9V14H6V9H1V6H6Z" fill="#8fb0d6" stroke="#6a8cb5" stroke-width=".8"/></svg><svg class="w-[7px] h-[4px] mt-[5px]"><use href="#down"/></svg></div>
    </div>
  </div>

  <!-- status bar -->
  <div class="flex-1 flex items-center pl-[3px] pb-[8px] relative">
    <span class="w-[1176px]">Valid, Internal name: LCS_0</span>
    <svg class="w-[12px] h-[15px]" viewBox="0 0 12 15"><rect x="2" y="1" width="8" height="13" rx="4" fill="none" stroke="#444" stroke-width="1.300"/><path d="M4.500 2V6H7.500V2M6 2V5" stroke="#444" fill="none"/></svg>
    <span class="ml-[3px] w-[70px] text-[#2b2b2b]">Blender</span><svg class="w-[7px] h-[4px] text-[#666]"><use href="#down"/></svg>
    <span class="ml-[11px]">56.50 mm x 55.77 mm</span>
    <svg class="absolute right-[3px] bottom-[8px] w-[10px] h-[12px]" viewBox="0 0 10 12"><path d="M8 1H9M5 4H6M8 4H9M2 7H3M5 7H6M8 7H9M0 10H1M2 10H3M5 10H6M8 10H9" stroke="#aaa"/></svg>
  </div>
</div>
</div>
</body>
</html>
